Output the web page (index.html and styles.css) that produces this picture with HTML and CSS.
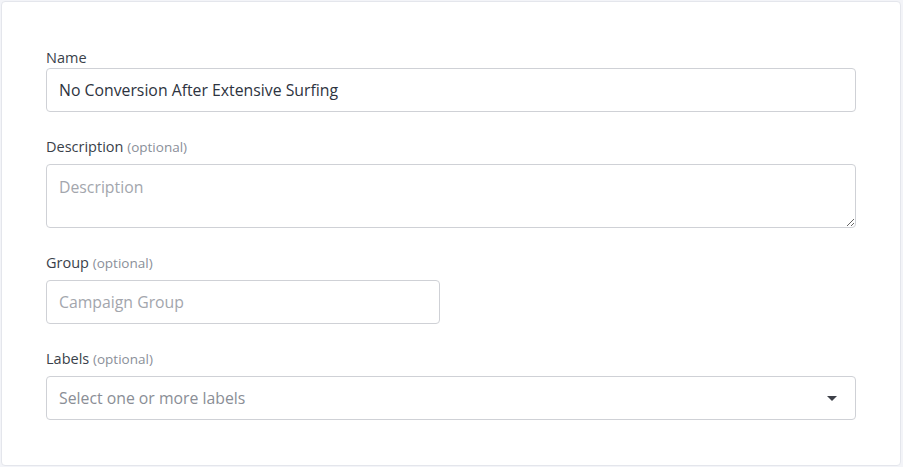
FILE: index.html
```html
<!DOCTYPE html>
<html lang="en">
<head>
<meta charset="UTF-8" />
<meta name="viewport" content="width=device-width, initial-scale=1" />
<title>Campaign - Details</title>
<link rel="stylesheet" href="styles.css">
</head>
<body>

<div class="card">
  <form class="campaign-form">

    <div class="field">
      <label for="campaign-name" class="label-tight">Name</label>
      <input type="text" id="campaign-name" class="input" value="No Conversion After Extensive Surfing" />
    </div>

    <div class="field">
      <label for="campaign-description">Description <span class="optional">(optional)</span></label>
      <textarea id="campaign-description" class="input textarea" placeholder="Description"></textarea>
    </div>

    <div class="field">
      <label for="campaign-group">Group <span class="optional">(optional)</span></label>
      <input type="text" id="campaign-group" class="input input-half" placeholder="Campaign Group" />
    </div>

    <div class="field">
      <label>Labels <span class="optional">(optional)</span></label>
      <div class="input select">
        <span class="select-placeholder">Select one or more labels</span>
        <span class="caret"></span>
      </div>
    </div>

  </form>
</div>

</body>
</html>
```

FILE: styles.css
```css
html, body {
  margin: 0;
  height: 100%;
}
body {
  font-family: "Open Sans", Arial, sans-serif;
  background: #f3f4f8;
  padding: 1px 2px 1px 1px;
  box-sizing: border-box;
}
.card {
  background: white;
  border: 1px solid #e4e6ec;
  border-radius: 4px;
  padding: 42px 44px 44px 44px;
  height: 100%;
  box-sizing: border-box;
}
.field {
  margin-bottom: 28px;
}
.field:last-child {
  margin-bottom: 0;
}
label {
  display: block;
  font-size: 14.5px;
  line-height: 20px;
  margin-bottom: 7px;
  margin-top: -3px;
  color: #3a3f4a;
}
.label-tight {
  margin-top: 4px;
  margin-bottom: 0;
}
.optional {
  font-size: 13.5px;
  color: #8a8f99;
}
.input {
  display: block;
  width: 100%;
  height: 44px;
  box-sizing: border-box;
  padding: 0 12px;
  border: 1px solid #cfd1d6;
  border-radius: 4px;
  font-family: "Open Sans", Arial, sans-serif;
  font-size: 15.8px;
  color: #2d3340;
  background: white;
  outline: none;
}
.input::placeholder {
  color: #a3a6ad;
}
.input-half {
  width: 394px;
}
.textarea {
  height: 64px;
  padding: 11px 12px;
  line-height: 22px;
  resize: vertical;
}
.select {
  display: flex;
  align-items: center;
  justify-content: space-between;
  padding-right: 18px;
}
.select-placeholder {
  color: #8a8e96;
}
.caret {
  width: 0;
  height: 0;
  border-left: 5px solid transparent;
  border-right: 5px solid transparent;
  border-top: 5px solid #3d4048;
}
```
